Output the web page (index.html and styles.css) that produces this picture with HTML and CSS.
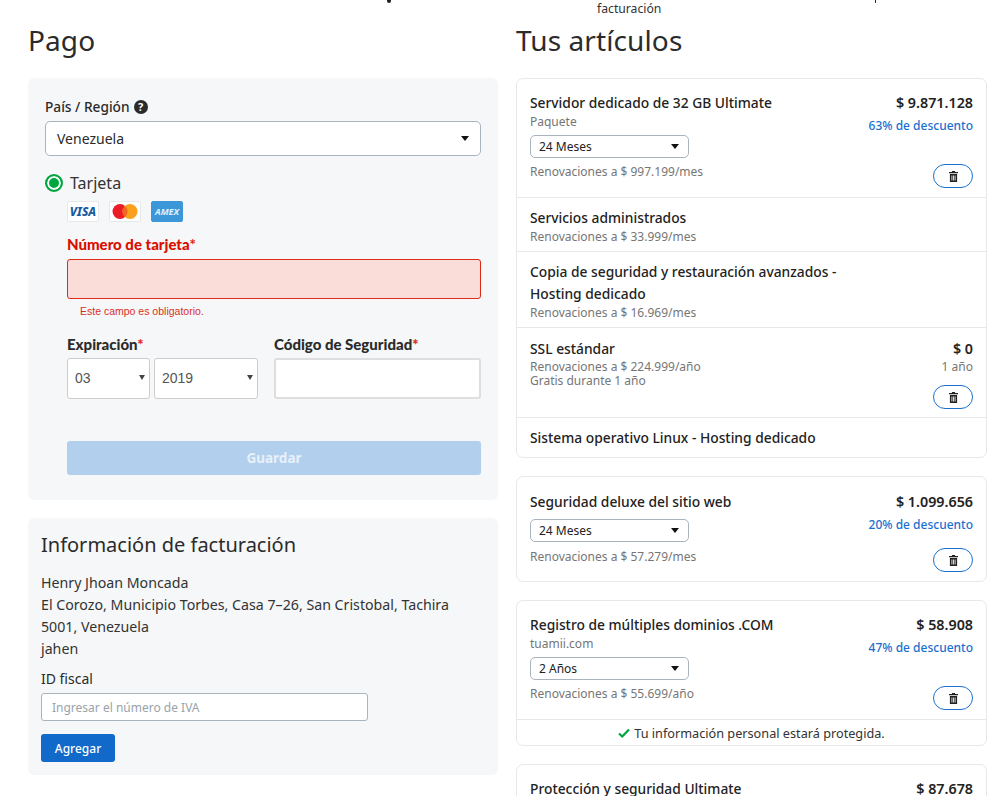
FILE: index.html
```html
<!DOCTYPE html>
<html lang="es">
<head>
  <meta charset="UTF-8" />
  <meta name="viewport" content="width=device-width, initial-scale=1" />
  <title>Pago</title>
  <link rel="stylesheet" href="styles.css">
</head>
<body>
  <div class="steps">
    <span class="step-mark step-mark-a"></span>
    <span class="step-text">facturación</span>
    <span class="step-mark step-mark-b"></span>
  </div>

  <div class="columns">
    <div class="col">
      <h1>Pago</h1>

      <div class="panel panel-pago">
        <div class="label-pais">País / Región <span class="help">?</span></div>
        <div class="select select-pais">
          <span>Venezuela</span>
          <span class="arrow"></span>
        </div>

        <div class="radio-row">
          <span class="radio"></span>
          <span>Tarjeta</span>
        </div>

        <div class="form-tarjeta">
          <div class="cards">
            <span class="card-logo visa">VISA</span>
            <span class="card-logo"><svg width="26" height="15" viewBox="0 0 26 15"><circle cx="8" cy="7.5" r="7.5" fill="#eb1c26"/><circle cx="18" cy="7.5" r="7.5" fill="#f9a11b"/><path d="M13 1.900a7.500 7.500 0 0 1 0 11.200a7.500 7.500 0 0 1 0-11.200z" fill="#f26522"/></svg></span>
            <span class="card-logo amex">AMEX</span>
          </div>

          <label class="field-label error-label">Número de tarjeta<span class="req">*</span></label>
          <div class="input input-error"></div>
          <div class="error-msg">Este campo es obligatorio.</div>

          <div class="exp-row">
            <div class="exp-col">
              <label class="field-label">Expiración<span class="req">*</span></label>
              <div class="exp-selects">
                <div class="select-small sel-mes"><span>03</span><span class="arrow-small"></span></div>
                <div class="select-small sel-anio"><span>2019</span><span class="arrow-small"></span></div>
              </div>
            </div>
            <div class="cod-col">
              <label class="field-label">Código de Seguridad<span class="req">*</span></label>
              <div class="input"></div>
            </div>
          </div>

          <button class="btn-guardar">Guardar</button>
        </div>
      </div>

      <div class="panel panel-fact">
        <h2>Información de facturación</h2>
        <div class="direccion">
          Henry Jhoan Moncada<br>
          El Corozo, Municipio Torbes, Casa 7–26, San Cristobal, Tachira<br>
          5001, Venezuela<br>
          jahen
        </div>
        <div class="label-iva">ID fiscal</div>
        <input class="input-iva" type="text" placeholder="Ingresar el número de IVA" />
        <button class="btn-agregar">Agregar</button>
      </div>
    </div>

    <div class="col">
      <h1>Tus artículos</h1>

      <div class="item-card">
        <div class="row row-main">
          <div class="row-left">
            <div class="titulo">Servidor dedicado de 32 GB Ultimate</div>
            <div class="sub">Paquete</div>
            <div class="select term"><span>24 Meses</span><span class="arrow"></span></div>
            <div class="sub renov">Renovaciones a $ 997.199/mes</div>
          </div>
          <div class="row-right">
            <div class="precio">$ 9.871.128</div>
            <div class="descuento">63% de descuento</div>
            <button class="btn-trash"><svg width="9" height="11" viewBox="0 0 10 12"><path d="M3.500 0h3l.5 1h3v1.300H0V1h3zM1 3.300h8V12H1zM2.800 4.800v5.700h.9V4.800zM4.550 4.800v5.700h.9V4.800zM6.300 4.800v5.700h.9V4.800z" fill="#222" fill-rule="evenodd"/></svg></button>
          </div>
        </div>
        <div class="row row-sub">
          <div class="titulo">Servicios administrados</div>
          <div class="sub">Renovaciones a $ 33.999/mes</div>
        </div>
        <div class="row row-sub">
          <div class="titulo titulo-wrap">Copia de seguridad y restauración avanzados - Hosting dedicado</div>
          <div class="sub">Renovaciones a $ 16.969/mes</div>
        </div>
        <div class="row row-ssl">
          <div class="row-left">
            <div class="titulo">SSL estándar</div>
            <div class="sub sub-tight">Renovaciones a $ 224.999/año</div>
            <div class="sub sub-tight">Gratis durante 1 año</div>
          </div>
          <div class="row-right">
            <div class="precio">$ 0</div>
            <div class="sub sub-tight">1 año</div>
            <button class="btn-trash"><svg width="9" height="11" viewBox="0 0 10 12"><path d="M3.500 0h3l.5 1h3v1.300H0V1h3zM1 3.300h8V12H1zM2.800 4.800v5.700h.9V4.800zM4.550 4.800v5.700h.9V4.800zM6.300 4.800v5.700h.9V4.800z" fill="#222" fill-rule="evenodd"/></svg></button>
          </div>
        </div>
        <div class="row row-last">
          <div class="titulo">Sistema operativo Linux - Hosting dedicado</div>
        </div>
      </div>

      <div class="item-card">
        <div class="row row-main row-plain">
          <div class="row-left">
            <div class="titulo">Seguridad deluxe del sitio web</div>
            <div class="select term term-solo"><span>24 Meses</span><span class="arrow"></span></div>
            <div class="sub renov">Renovaciones a $ 57.279/mes</div>
          </div>
          <div class="row-right">
            <div class="precio">$ 1.099.656</div>
            <div class="descuento">20% de descuento</div>
            <button class="btn-trash"><svg width="9" height="11" viewBox="0 0 10 12"><path d="M3.500 0h3l.5 1h3v1.300H0V1h3zM1 3.300h8V12H1zM2.800 4.800v5.700h.9V4.800zM4.550 4.800v5.700h.9V4.800zM6.300 4.800v5.700h.9V4.800z" fill="#222" fill-rule="evenodd"/></svg></button>
          </div>
        </div>
      </div>

      <div class="item-card">
        <div class="row row-main">
          <div class="row-left">
            <div class="titulo">Registro de múltiples dominios .COM</div>
            <div class="sub">tuamii.com</div>
            <div class="select term"><span>2 Años</span><span class="arrow"></span></div>
            <div class="sub renov">Renovaciones a $ 55.699/año</div>
          </div>
          <div class="row-right">
            <div class="precio">$ 58.908</div>
            <div class="descuento">47% de descuento</div>
            <button class="btn-trash"><svg width="9" height="11" viewBox="0 0 10 12"><path d="M3.500 0h3l.5 1h3v1.300H0V1h3zM1 3.300h8V12H1zM2.800 4.800v5.700h.9V4.800zM4.550 4.800v5.700h.9V4.800zM6.300 4.800v5.700h.9V4.800z" fill="#222" fill-rule="evenodd"/></svg></button>
          </div>
        </div>
        <div class="protegida">
          <svg width="12" height="10" viewBox="0 0 12 10"><path d="M1 5.500l3.200 3L11 1.500" fill="none" stroke="#00a63f" stroke-width="2.200"/></svg>
          <span>Tu información personal estará protegida.</span>
        </div>
      </div>

      <div class="item-card">
        <div class="row row-main">
          <div class="row-left">
            <div class="titulo">Protección y seguridad Ultimate</div>
          </div>
          <div class="row-right">
            <div class="precio">$ 87.678</div>
          </div>
        </div>
      </div>
    </div>
  </div>
</body>
</html>
```

FILE: styles.css
```css
html, body {
  margin: 0;
  height: 796px;
  overflow: hidden;
}
body {
  font-family: "Noto Sans", sans-serif;
  background: #fff;
  color: #2b2b2b;
  font-size: 14px;
}
.steps {
  display: flex;
  height: 18px;
  font-size: 12.200px;
  line-height: 17px;
}
.step-text {
  margin-left: 206px;
  color: #333;
}
.step-mark {
  width: 4px;
  height: 3px;
  background: #222;
  border-radius: 0 0 2px 2px;
}
.step-mark-a {
  margin-left: 387px;
}
.step-mark-b {
  width: 1px;
  height: 3px;
  margin-left: 214px;
}
.columns {
  display: grid;
  grid-template-columns: 470px 471px;
  gap: 18px;
  padding-left: 28px;
}
h1 {
  font-size: 28px;
  font-weight: 400;
  line-height: 44px;
  margin: 0 0 16px;
  letter-spacing: 0.1px;
}
.panel {
  background: #f5f7f8;
  border-radius: 6px;
  box-sizing: border-box;
}
.panel-pago {
  height: 422px;
  padding: 19px 17px;
  margin-bottom: 18px;
}
.label-pais {
  display: flex;
  align-items: center;
  gap: 4px;
  font-size: 13.700px;
  font-weight: 500;
  line-height: 20px;
  margin-bottom: 4px;
}
.help {
  width: 14px;
  height: 14px;
  border-radius: 50%;
  background: #2b2b2b;
  color: #fff;
  font-size: 11px;
  font-weight: 700;
  line-height: 14px;
  text-align: center;
}
.select {
  display: flex;
  justify-content: space-between;
  align-items: center;
  box-sizing: border-box;
  background: #fff;
  border: 1px solid #aab4bf;
  border-radius: 5px;
}
.select-pais {
  height: 35px;
  padding: 0 11px;
  font-size: 14px;
}
.arrow {
  width: 0;
  height: 0;
  border-left: 4px solid transparent;
  border-right: 4px solid transparent;
  border-top: 5px solid #111;
}
.radio-row {
  display: flex;
  align-items: center;
  gap: 7px;
  margin-top: 16px;
  font-size: 16px;
  line-height: 22px;
  color: #333;
}
.radio {
  box-sizing: border-box;
  width: 18px;
  height: 18px;
  border: 2px solid #00a63f;
  border-radius: 50%;
  background: #00a63f;
  box-shadow: inset 0 0 0 2px #fff;
}
.form-tarjeta {
  padding-left: 22px;
}
.cards {
  display: flex;
  gap: 10px;
  margin-top: 7px;
}
.card-logo {
  display: flex;
  align-items: center;
  justify-content: center;
  box-sizing: border-box;
  width: 32px;
  height: 21px;
  background: #fff;
  border: 1px solid #e8e8e8;
  border-radius: 2px;
}
.visa {
  color: #1a5a9e;
  font-size: 12px;
  font-weight: 800;
  font-style: italic;
}
.amex {
  background: #3c97d9;
  border-color: #3c97d9;
  color: #dff0fb;
  font-size: 9px;
  font-weight: 700;
  font-style: italic;
}
.field-label {
  display: block;
  font-family: Lato, sans-serif;
  font-weight: 900;
  font-size: 15px;
  line-height: 20px;
  margin-bottom: 4px;
}
.error-label {
  margin-top: 12px;
  margin-bottom: 5px;
  color: #d90f00;
}
.req {
  color: #e02a1a;
}
.input {
  box-sizing: border-box;
  height: 41px;
  background: #fff;
  border: 2px solid #dedede;
  border-radius: 3px;
}
.input-error {
  height: 40px;
  background: #fadcd8;
  border: 1px solid #e02a1a;
}
.error-msg {
  font-family: "Liberation Sans", sans-serif;
  font-size: 10.500px;
  line-height: 14px;
  color: #d8301f;
  margin: 5px 0 0 13px;
}
.exp-row {
  display: flex;
  gap: 16px;
  margin-top: 16px;
}
.exp-selects {
  display: flex;
  gap: 4px;
}
.select-small {
  display: flex;
  justify-content: space-between;
  align-items: center;
  box-sizing: border-box;
  height: 41px;
  padding: 0 4px 2px 7px;
  background: #fff;
  border: 1px solid #ccc;
  border-radius: 3px;
  font-family: "Liberation Sans", sans-serif;
  font-size: 14px;
  color: #555;
}
.sel-mes {
  width: 83px;
}
.sel-anio {
  width: 104px;
}
.arrow-small {
  width: 0;
  height: 0;
  border-left: 3px solid transparent;
  border-right: 3px solid transparent;
  border-top: 5px solid #444;
}
.cod-col {
  flex: 1;
}
.btn-guardar {
  display: block;
  width: 100%;
  height: 34px;
  margin-top: 42px;
  background: #b2d0ee;
  border: none;
  border-radius: 3px;
  color: #e8f1fa;
  font-family: "Noto Sans", sans-serif;
  font-size: 13.500px;
  font-weight: 700;
}
.panel-fact {
  height: 257px;
  padding: 13px 13px;
}
h2 {
  font-size: 20px;
  font-weight: 400;
  line-height: 28px;
  margin: 0 0 13px;
}
.direccion {
  font-size: 14.200px;
  line-height: 22px;
  color: #333;
}
.label-iva {
  line-height: 20px;
  margin-top: 9px;
  margin-bottom: 4px;
}
.input-iva {
  display: block;
  box-sizing: border-box;
  width: 327px;
  height: 28px;
  padding: 0 10px;
  border: 1px solid #aab4bf;
  border-radius: 3px;
  background: #fff;
  font-family: "Noto Sans", sans-serif;
  font-size: 12px;
}
.input-iva::placeholder {
  color: #9aa3ab;
}
.btn-agregar {
  display: block;
  margin-top: 13px;
  width: 74px;
  height: 28px;
  background: #1169c9;
  border: none;
  border-radius: 3px;
  color: #fff;
  font-family: "Noto Sans", sans-serif;
  font-size: 12px;
  font-weight: 500;
}
.item-card {
  border: 1px solid #e8e8e8;
  border-radius: 7px;
  margin-bottom: 18px;
  overflow: hidden;
}
.row {
  padding: 0 13px;
  border-bottom: 1px solid #e8e8e8;
}
.row:last-child {
  border-bottom: none;
}
.row-main, .row-ssl {
  display: flex;
  justify-content: space-between;
  box-sizing: border-box;
}
.row-main {
  height: 119px;
  padding-top: 14px;
}
.row-plain {
  height: 104px;
  padding-top: 15px;
}
.row-ssl {
  height: 90px;
  padding-top: 11px;
}
.row-sub {
  padding-top: 10px;
  padding-bottom: 6px;
}
.row-sub .sub {
  margin-top: 1px;
}
.row-last {
  height: 39px;
  padding-top: 10px;
  box-sizing: border-box;
}
.titulo {
  font-size: 13.800px;
  font-weight: 500;
  line-height: 20px;
  color: #222;
}
.titulo + .sub {
  margin-top: 1px;
}
.titulo-wrap {
  width: 320px;
  line-height: 22px;
  margin: -1px 0 -1px;
}
.sub {
  font-size: 12px;
  line-height: 16px;
  color: #767676;
}
.sub-tight {
  line-height: 14px;
}
.row-right .sub-tight {
  margin-top: 1px;
}
.term {
  width: 159px;
  height: 23px;
  padding: 0 9px 0 8px;
  margin-top: 5px;
  font-size: 12px;
  color: #222;
}
.term-solo {
  margin-top: 7px;
}
.renov {
  margin-top: 6px;
}
.term-solo + .renov {
  margin-top: 7px;
}
.row-right {
  display: flex;
  flex-direction: column;
  align-items: flex-end;
}
.precio {
  font-size: 14.300px;
  font-weight: 600;
  line-height: 20px;
  color: #222;
}
.descuento {
  font-size: 12px;
  font-weight: 500;
  line-height: 16px;
  margin-top: 5px;
  color: #1b6fd0;
}
.btn-trash {
  display: flex;
  align-items: center;
  justify-content: center;
  width: 40px;
  height: 24px;
  margin-top: 30px;
  padding: 0;
  background: #fff;
  border: 1px solid #1b6fd0;
  border-radius: 12px;
}
.row-plain .btn-trash {
  margin-top: 15px;
}
.row-ssl .btn-trash {
  margin-top: 11px;
}
.protegida {
  display: flex;
  justify-content: center;
  align-items: center;
  gap: 4px;
  height: 25px;
  font-size: 12.700px;
  color: #333;
}
```
